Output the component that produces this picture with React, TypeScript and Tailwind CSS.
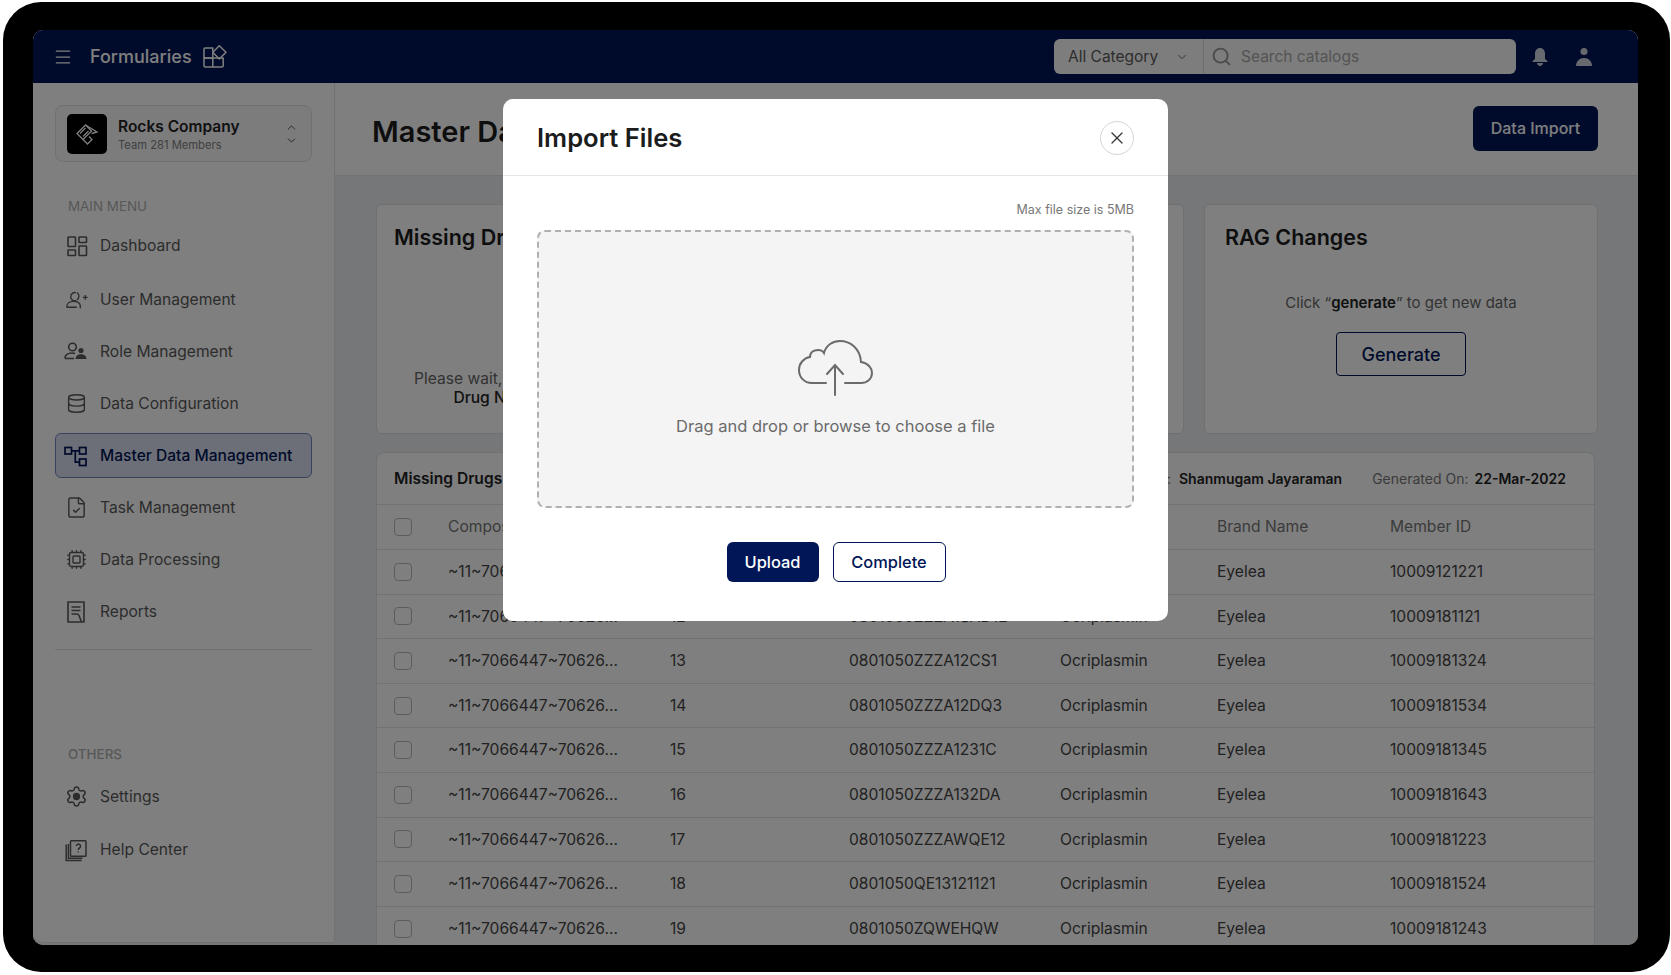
import { ChevronDown, ChevronUp, Cpu, Database, FileCheck, Menu, Search, Settings, X } from "lucide-react"
import type { ReactNode } from "react"

const rows = [
  { seq: "11", code: "0801050ZZZA1AD11", id: "10009121221" },
  { seq: "12", code: "0801050ZZZA1SAD12", id: "10009181121" },
  { seq: "13", code: "0801050ZZZA12CS1", id: "10009181324" },
  { seq: "14", code: "0801050ZZZA12DQ3", id: "10009181534" },
  { seq: "15", code: "0801050ZZZA1231C", id: "10009181345" },
  { seq: "16", code: "0801050ZZZA132DA", id: "10009181643" },
  { seq: "17", code: "0801050ZZZAWQE12", id: "10009181223" },
  { seq: "18", code: "0801050QE13121121", id: "10009181524" },
  { seq: "19", code: "0801050ZQWEHQW", id: "10009181243" },
]

const columns = "grid grid-cols-[54px_222px_179px_211px_157px_173px_1fr] items-center pl-[17px]"

function GridIcon() {
  return (
    <svg width="24" height="24" viewBox="0 0 24 24" fill="none" stroke="currentColor" strokeWidth="1.6">
      <rect x="4" y="3" width="7.500" height="9.500" rx="0.6" />
      <rect x="15" y="3" width="7.500" height="5.500" rx="0.6" />
      <rect x="4" y="16" width="7.500" height="5.500" rx="0.6" />
      <rect x="15" y="12" width="7.500" height="9.500" rx="0.6" />
    </svg>
  )
}

function UserPlusIcon() {
  return (
    <svg width="28" height="24" viewBox="-2 0 28 24" fill="none" stroke="currentColor" strokeWidth="1.6">
      <path d="M12 3.500a4.800 4.800 0 1 0 0 9.200c-1 .2-2 .3-2.800.3" />
      <path d="M13 3.500a4.800 4.800 0 0 1 0 8.400" />
      <path d="M1 20.500c0-4.500 4-7 8.500-7 2 0 3.800.5 5.200 1.400 1.400 1 2.300 2.500 2.300 4.100v2.500M1 20.500h12" />
      <path d="M20 9h5.500M22.800 6.200v5.600" />
    </svg>
  )
}

function RoleIcon() {
  return (
    <svg width="24" height="24" viewBox="0 0 24 24" fill="none" stroke="currentColor" strokeWidth="1.6">
      <circle cx="8.500" cy="7" r="3.800" />
      <path d="M1 18.500c0-3.500 3-5.500 7-5.500 1 0 2 .1 3 .5M1 18.500h9" />
      <circle cx="17" cy="10.500" r="2.600" fill="currentColor" stroke="none" />
      <path d="M11.500 19c0-3 2.500-4.800 5.500-4.800s5.500 1.800 5.500 4.800z" fill="currentColor" stroke="none" />
    </svg>
  )
}

function TreeIcon() {
  return (
    <svg width="24" height="24" viewBox="0 0 24 24" fill="none" stroke="currentColor" strokeWidth="1.7">
      <rect x="1" y="3.500" width="6.500" height="6.500" />
      <rect x="15.500" y="3.500" width="6.500" height="6.500" />
      <rect x="15.500" y="15" width="6.500" height="6.500" />
      <path d="M7.500 6.800h8M11.300 6.800v11.400h4.200" />
    </svg>
  )
}

function ReportIcon() {
  return (
    <svg width="24" height="24" viewBox="0 0 24 24" fill="none" stroke="currentColor" strokeWidth="1.6">
      <path d="M4 2h16v20H4z" strokeLinejoin="round" />
      <path d="M7.500 7h9M7.500 10.500h9M7.500 14H13c1 0 1.500.5 2 1.500l2.500 6.500" />
    </svg>
  )
}

function HelpIcon() {
  return (
    <svg width="24" height="24" viewBox="0 0 24 24" fill="none" stroke="currentColor" strokeWidth="1.5">
      <rect x="6.500" y="2.700" width="15.500" height="15.500" rx="0.8" />
      <path d="M2.200 6.500v16h15.500M4.400 6v14.300h14" />
      <path d="M12.300 8a2.100 2.100 0 1 1 3.200 2c-.8.500-1.200 1-1.200 1.900M14.300 13.500v.9" />
    </svg>
  )
}

function FormularyIcon() {
  return (
    <svg width="24" height="23" viewBox="0 0 24 23" fill="none" stroke="currentColor" strokeWidth="1.5" strokeLinejoin="round">
      <path d="M1 4.200A1.200 1.200 0 0 1 2.200 3H9.800V13H1z" />
      <path d="M1 13h19.200v7.800a1.200 1.200 0 0 1-1.200 1.200H2.200A1.200 1.200 0 0 1 1 20.800zM9.800 13v9" />
      <path d="M16.300.8 23 7.300l-6.700 6.700-6.500-6.700z" />
    </svg>
  )
}

function CompanyLogo() {
  return (
    <svg width="24" height="24" viewBox="0 0 24 24" fill="none" stroke="white" strokeWidth="1.300">
      <path d="M2 11.500 10.500 3l6 6L8 17.500z" />
      <path d="m5 11.500 5.500-5.500M8 14.500 13.500 9" />
      <path d="m10.500 3 11.500 7-5.500 1.500" />
      <path d="m8 17.500 4.500 4.500 4.500-4.500-3-3" />
    </svg>
  )
}

function BellIcon() {
  return (
    <svg width="16" height="18" viewBox="0 0 16 18" fill="currentColor">
      <path d="M8 0c3.200 0 5 2.500 5 5.500V11l2.400 2v1H.6v-1L3 11V5.500C3 2.500 4.800 0 8 0z" />
      <path d="M5 15h6c0 1.500-1.300 3-3 3s-3-1.500-3-3z" />
    </svg>
  )
}

function UserIcon() {
  return (
    <svg width="16" height="18" viewBox="0 0 16 18" fill="currentColor">
      <circle cx="8" cy="3.500" r="3.500" />
      <path d="M0 18c0-5 3.500-8 8-8s8 3 8 8z" />
    </svg>
  )
}

function CloudIcon() {
  return (
    <svg width="75" height="56" viewBox="0 0 75 56" fill="none" stroke="#6b6b6b" strokeWidth="2" strokeLinecap="round">
      <path d="M28 43H14C6 43 1 37 1 30C1 23 6 18 12 17C12 12 16 10 20 10C23 10 25 11 26 13C28 5 35 1 42 1C52 1 62 8 63 22C70 23 74 28 74 33C74 39 69 43 63 43H47" />
      <path d="M37 55V25M29 34L37 25L45 34" />
    </svg>
  )
}

function NavItem({ icon, label, active, className }: { icon: ReactNode; label: string; active?: boolean; className?: string }) {
  return (
    <div
      className={`flex h-[45px] items-center gap-3 rounded-md border pl-2 text-[15.6px] ${
        active ? "border-[#7486bb] bg-[#d9deee] font-medium text-[#001657]" : "border-transparent text-[#595959]"
      } ${className ?? ""}`}
    >
      <span className="flex w-6 shrink-0 justify-center">{icon}</span>
      {label}
    </div>
  )
}

function Checkbox() {
  return <div className="h-[18px] w-[18px] rounded-[4px] border border-[#b5b9bd] bg-white" />
}

export default function App() {
  return (
    <div className="h-[975px] overflow-hidden bg-white pl-[3px] pr-[1px] pt-[2px] font-['Inter',sans-serif]">
      <div className="h-[970px] rounded-[38px] bg-black pb-[27px] pl-[30px] pr-[32px] pt-[28px]">
        <div className="relative flex h-[915px] flex-col overflow-hidden rounded-[10px] bg-[#eceef0]">
          <header className="flex h-[53px] shrink-0 items-center bg-[#001657] pl-[20px] pr-[46px] text-white">
            <Menu size={20} strokeWidth={1.5} />
            <span className="ml-[17px] text-lg font-medium">Formularies</span>
            <span className="ml-[11px] text-white"><FormularyIcon /></span>
            <div className="ml-auto flex h-[35px] w-[462px] items-center rounded-md bg-[#fafafa]">
              <div className="flex h-full w-[150px] items-center justify-between border-r border-[#dadada] pl-[14px] pr-[14px] text-[15.5px] text-[#5a5a5a]">
                All Category
                <ChevronDown size={14} strokeWidth={1.5} />
              </div>
              <Search size={21} strokeWidth={2.2} className="ml-[7px] text-[#999]" />
              <span className="ml-[9px] text-[15.5px] text-[#a8a8a8]">Search catalogs</span>
            </div>
            <span className="ml-[16px] text-[#ccd3dc]"><BellIcon /></span>
            <span className="ml-[28px] text-[#ccd3dc]"><UserIcon /></span>
          </header>

          <div className="flex min-h-0 flex-1">
            <aside className="mb-[2px] w-[302px] shrink-0 rounded-bl-[10px] border-b border-r border-[#e4e4e4] bg-white px-[22px] pt-[22px]">
              <div className="flex h-[57px] items-center rounded-lg border border-[#e0e0e0] bg-[#f8f9fa] pl-[11px] pr-[13px]">
                <div className="flex h-10 w-10 items-center justify-center rounded-[5px] bg-black">
                  <CompanyLogo />
                </div>
                <div className="ml-[11px] flex-1 pt-[2px]">
                  <div className="text-[15.5px] font-semibold leading-[20px] text-[#222]">Rocks Company</div>
                  <div className="text-[11.2px] leading-[16px] text-[#808080]">Team 281 Members</div>
                </div>
                <div className="flex flex-col items-center text-[#444]">
                  <ChevronUp size={13} strokeWidth={1.7} />
                  <ChevronDown size={13} strokeWidth={1.7} />
                </div>
              </div>

              <div className="ml-[13px] mt-[36px] text-[13.4px] leading-[16px] text-[#b0b0b0]">MAIN MENU</div>
              <div className="mt-[9px] flex flex-col gap-[7px]">
                <NavItem icon={<GridIcon />} label="Dashboard" className="mb-[2px]" />
                <NavItem icon={<UserPlusIcon />} label="User Management" />
                <NavItem icon={<RoleIcon />} label="Role Management" />
                <NavItem icon={<Database size={21} strokeWidth={1.6} />} label="Data Configuration" />
                <NavItem icon={<TreeIcon />} label="Master Data Management" active />
                <NavItem icon={<FileCheck size={23} strokeWidth={1.5} />} label="Task Management" />
                <NavItem icon={<Cpu size={21} strokeWidth={1.6} />} label="Data Processing" />
                <NavItem icon={<ReportIcon />} label="Reports" />
              </div>
              <div className="mt-[15px] border-t border-[#e0e0e0]" />

              <div className="ml-[13px] mt-[96px] text-[13.4px] font-medium leading-[16px] text-[#b0b0b0]">OTHERS</div>
              <div className="mt-3 flex flex-col gap-2">
                <NavItem
                  icon={
                    <Settings size={23} strokeWidth={1.6}>
                      <circle cx="12" cy="12" r="2.5" fill="currentColor" />
                    </Settings>
                  }
                  label="Settings"
                />
                <NavItem icon={<HelpIcon />} label="Help Center" />
              </div>
            </aside>

            <main className="min-w-0 flex-1">
              <div className="flex h-[93px] items-center justify-between border-b border-[#e2e4e8] bg-white pl-[37px] pr-[40px]">
                <h1 className="pt-[6px] text-[29px] font-semibold leading-9 text-[#1c1c1c]">Master Data Management</h1>
                <button className="mb-[2px] h-[45px] w-[125px] rounded-md bg-[#001657] text-base font-medium text-white">Data Import</button>
              </div>

              <div className="pl-[41px] pr-[40px] pt-[28px]">
                <div className="grid h-[230px] grid-cols-3 gap-5">
                  <section className="rounded-md border border-[#e0e0e0] bg-white">
                    <h2 className="pl-[17px] pt-[16px] text-[21.5px] font-semibold leading-8 text-[#1c1c1c]">Missing Drugs</h2>
                    <p className="mt-[116px] text-center text-[15.6px] leading-[19px] text-[#666]">
                      Please wait, we are processing the file now
                      <br />
                      <span className="font-medium text-[#222]">Drug Names and Members list...</span>
                    </p>
                  </section>
                  <section className="rounded-md border border-[#e0e0e0] bg-white">
                    <h2 className="pl-[17px] pt-[16px] text-[21.5px] font-semibold leading-8 text-[#1c1c1c]">Missing Members</h2>
                  </section>
                  <section className="flex flex-col items-center rounded-md border border-[#e0e0e0] bg-white">
                    <h2 className="w-full pl-5 pt-[16px] text-[21.5px] font-semibold leading-8 text-[#1c1c1c]">RAG Changes</h2>
                    <p className="mt-10 text-[15px] leading-[20px] text-[#666]">
                      Click “<span className="font-semibold text-[#222]">generate</span>” to get new data
                    </p>
                    <button className="mt-[19px] h-[44px] w-[130px] rounded-[4px] border border-[#001657] bg-white text-[18px] font-medium text-[#001657]">
                      Generate
                    </button>
                  </section>
                </div>

                <section className="mr-[3px] mt-[18px] rounded-t-lg border-x border-t border-[#e0e0e0] bg-white">
                  <div className="flex h-[52px] items-center border-b border-[#e4e4e4] pl-[17px] pr-[28px]">
                    <span className="text-[15.6px] font-semibold text-[#222]">Missing Drugs</span>
                    <span className="ml-auto text-sm text-[#666]">Generated By:</span>
                    <span className="ml-2 text-sm font-semibold text-[#222]">Shanmugam Jayaraman</span>
                    <span className="ml-[30px] text-sm text-[#777]">Generated On:</span>
                    <span className="ml-[6px] text-sm font-semibold text-[#222]">22-Mar-2022</span>
                  </div>
                  <div className={`${columns} h-[45px] border-b border-[#e4e4e4] text-[15.6px] text-[#777]`}>
                    <Checkbox />
                    <span>Composition</span>
                    <span>Sequence</span>
                    <span>BNF Code</span>
                    <span>Drug Name</span>
                    <span>Brand Name</span>
                    <span>Member ID</span>
                  </div>
                  {rows.map((row) => (
                    <div key={row.seq} className={`${columns} h-[44.6px] border-b border-[#e4e4e4] text-[15.6px] text-[#444]`}>
                      <Checkbox />
                      <span>~11~7066447~70626...</span>
                      <span>{row.seq}</span>
                      <span>{row.code}</span>
                      <span>Ocriplasmin</span>
                      <span>Eyelea</span>
                      <span>{row.id}</span>
                    </div>
                  ))}
                </section>
              </div>
            </main>
          </div>

          <div className="absolute inset-0 flex items-start justify-center bg-black/50 pt-[69px]">
            <div className="h-[522px] w-[665px] rounded-[10px] bg-white">
              <div className="flex h-[77px] items-center justify-between border-b border-[#e6e6e6] pl-[34px] pr-[34px]">
                <h2 className="mt-[2px] text-[25.6px] font-semibold text-[#1c1c1c]">Import Files</h2>
                <button className="mt-[1px] flex h-[34px] w-[34px] items-center justify-center rounded-full border border-[#d4d4d4] text-[#333]">
                  <X size={20} strokeWidth={1.5} />
                </button>
              </div>
              <div className="px-[34px] pt-[26px]">
                <div className="text-right text-[12.5px] leading-4 text-[#777]">Max file size is 5MB</div>
                <div className="mt-3 flex h-[278px] flex-col items-center rounded-lg border-2 border-dashed border-[#b0b0b0] bg-[#f4f4f4] pt-[108px]">
                  <CloudIcon />
                  <div className="mt-[19px] text-[16.5px] leading-[22px] text-[#6b6b6b]">Drag and drop or browse to choose a file</div>
                </div>
                <div className="ml-[1px] mt-[34px] flex justify-center gap-[14px]">
                  <button className="h-10 w-[92px] rounded-md bg-[#001657] text-[16.4px] font-medium text-white">Upload</button>
                  <button className="h-10 w-[113px] rounded-md border border-[#001657] bg-white text-[16.4px] font-medium text-[#001657]">Complete</button>
                </div>
              </div>
            </div>
          </div>
        </div>
      </div>
    </div>
  )
}
